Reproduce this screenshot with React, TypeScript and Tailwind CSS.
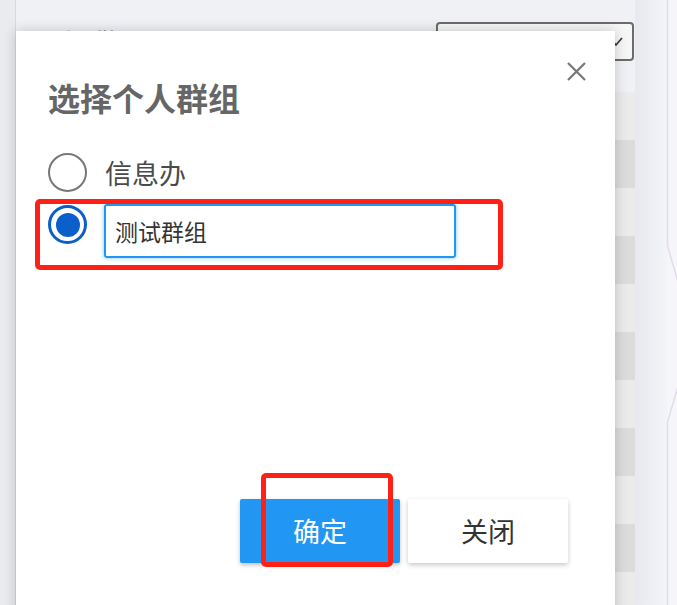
import React from 'react';

const rows = [0, 1, 2, 3, 4, 5, 6, 7, 8, 9, 10];

const App: React.FC = () => {
  return (
    <div className="relative w-[677px] h-[605px] overflow-hidden bg-[#f0f1f5] font-['Noto_Sans_CJK_SC','Noto_Sans',sans-serif]">
      {/* page behind the dialog */}
      <div className="flex h-full">
        <div className="w-[16px] shrink-0 border-r border-[#ddd6e4] bg-[#eaebef]" />
        <div className="flex flex-1 min-w-0">
          <div className="flex flex-1 flex-col overflow-hidden">
            <div className="flex h-[92px] shrink-0 items-start justify-between pl-[37px] pr-[1px] pt-[22px]">
              <span className="mt-[4px] text-[18px] leading-[24px] text-[#333]">所属群组：</span>
              <div className="relative h-[39px] w-[198px] rounded-[4px] border-2 border-[#6b6b6b] bg-[#f6f6f7]">
                <svg className="absolute right-[9px] top-[13px]" width="14" height="9" viewBox="0 0 14 9">
                  <path d="M1 1 L7 8 L13 1" fill="none" stroke="#333" strokeWidth="1.6" />
                </svg>
              </div>
            </div>
            <div className="flex shrink-0 flex-col">
              {rows.map((i) => (
                <div key={i} className={i % 2 === 0 ? 'h-[48px] shrink-0 bg-[#ebebeb]' : 'h-[48px] shrink-0 bg-[#dcdcdc]'} />
              ))}
            </div>
          </div>
          <div className="w-[32px] shrink-0 bg-linear-to-r from-[#e8e9ee] to-[#f3f4f8]" />
        </div>
        <div className="w-[10px] shrink-0 bg-[#f5f5fa]" />
      </div>

      {/* collapse handle line */}
      <svg className="absolute right-0 top-0" width="12" height="605" viewBox="665 0 12 605">
        <polyline
          points="667.5,0 667.5,246 681,292 681,376 667.5,422 667.5,605"
          fill="none"
          stroke="#e2dbe8"
          strokeWidth="1.5"
        />
      </svg>

      {/* dialog */}
      <div className="absolute left-[16px] top-[31px] h-[600px] w-[599px] bg-white pl-[32px] pt-[46px] shadow-[0_0_12px_rgba(0,0,0,0.2)]">
        <button className="absolute right-[28px] top-[30px] h-[21px] w-[21px]">
          <svg width="21" height="21" viewBox="0 0 21 21">
            <path d="M2 2 L19 19 M19 2 L2 19" stroke="#777" strokeWidth="2.2" />
          </svg>
        </button>

        <h2 className="text-[32px] font-bold leading-[40px] text-[#666]">选择个人群组</h2>

        <div className="mt-[36px] flex items-center">
          <span className="h-[39px] w-[39px] rounded-full border-2 border-[#777]" />
          <span className="ml-[18px] text-[27px] leading-[39px] text-[#4a4a4a]">信息办</span>
        </div>

        <div className="mt-[12px] flex items-start">
          <span className="mt-[1px] flex h-[39px] w-[39px] items-center justify-center rounded-full border-[3px] border-[#0b5fcb]">
            <span className="h-[24px] w-[24px] rounded-full bg-[#0b5fcb]" />
          </span>
          <input
            readOnly
            defaultValue="测试群组"
            className="ml-[17px] h-[54px] w-[352px] rounded-[3px] border-2 border-[#2196f3] pl-[9px] text-[23px] text-[#333] shadow-[0_0_4px_rgba(33,150,243,0.55)] outline-none"
          />
        </div>

        <div className="mt-[241px] flex justify-end gap-[8px] pr-[47px]">
          <button className="h-[64px] w-[160px] rounded-[2px] bg-[#2196f3] text-[27px] text-white shadow-[0_2px_4px_rgba(0,0,0,0.25)]">
            确定
          </button>
          <button className="h-[64px] w-[160px] rounded-[2px] bg-white text-[27px] text-[#333] shadow-[0_2px_5px_rgba(0,0,0,0.22)]">
            关闭
          </button>
        </div>
      </div>

      {/* red annotation boxes */}
      <div className="absolute left-[35px] top-[199px] h-[71px] w-[468px] rounded-[5px] border-[5px] border-[#ff2116]" />
      <div className="absolute left-[261px] top-[473px] h-[94px] w-[132px] rounded-[5px] border-[5px] border-[#ff2116]" />
    </div>
  );
};

export default App;
